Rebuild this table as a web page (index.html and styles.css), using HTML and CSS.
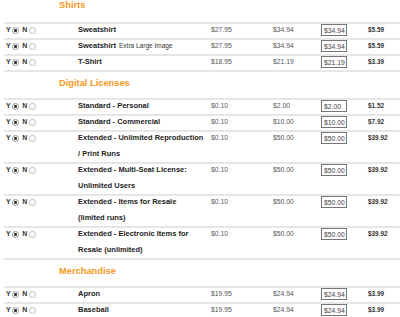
FILE: index.html
```html
<!DOCTYPE html>
<html>
<head>
<meta charset="utf-8">
<link rel="stylesheet" href="styles.css">
</head>
<body>
<div class="sheet">
  <div class="group-head first"><span class="group-title">Shirts</span></div>

  <div class="row">
    <div class="yn"><span class="lbl">Y</span><input type="radio" class="radio" name="r1" checked><span class="lbl n">N</span><input type="radio" class="radio" name="r1"></div>
    <div class="name">Sweatshirt</div>
    <div class="price">$27.95</div>
    <div class="price">$34.94</div>
    <div class="qty"><input class="box" type="text" value="$34.94" readonly></div>
    <div class="net">$5.59</div>
  </div>
  <div class="row">
    <div class="yn"><span class="lbl">Y</span><input type="radio" class="radio" name="r2" checked><span class="lbl n">N</span><input type="radio" class="radio" name="r2"></div>
    <div class="name">Sweatshirt <span class="note">Extra Large Image</span></div>
    <div class="price">$27.95</div>
    <div class="price">$34.94</div>
    <div class="qty"><input class="box" type="text" value="$34.94" readonly></div>
    <div class="net">$5.59</div>
  </div>
  <div class="row">
    <div class="yn"><span class="lbl">Y</span><input type="radio" class="radio" name="r3" checked><span class="lbl n">N</span><input type="radio" class="radio" name="r3"></div>
    <div class="name">T-Shirt</div>
    <div class="price">$18.95</div>
    <div class="price">$21.19</div>
    <div class="qty"><input class="box" type="text" value="$21.19" readonly></div>
    <div class="net">$3.39</div>
  </div>

  <div class="group-head"><span class="group-title">Digital Licenses</span></div>

  <div class="row">
    <div class="yn"><span class="lbl">Y</span><input type="radio" class="radio" name="r4" checked><span class="lbl n">N</span><input type="radio" class="radio" name="r4"></div>
    <div class="name">Standard - Personal</div>
    <div class="price">$0.10</div>
    <div class="price">$2.00</div>
    <div class="qty"><input class="box" type="text" value="$2.00" readonly></div>
    <div class="net">$1.52</div>
  </div>
  <div class="row">
    <div class="yn"><span class="lbl">Y</span><input type="radio" class="radio" name="r5" checked><span class="lbl n">N</span><input type="radio" class="radio" name="r5"></div>
    <div class="name">Standard - Commercial</div>
    <div class="price">$0.10</div>
    <div class="price">$10.00</div>
    <div class="qty"><input class="box" type="text" value="$10.00" readonly></div>
    <div class="net">$7.92</div>
  </div>
  <div class="row">
    <div class="yn"><span class="lbl">Y</span><input type="radio" class="radio" name="r6" checked><span class="lbl n">N</span><input type="radio" class="radio" name="r6"></div>
    <div class="name">Extended - Unlimited Reproduction<br>/ Print Runs</div>
    <div class="price">$0.10</div>
    <div class="price">$50.00</div>
    <div class="qty"><input class="box" type="text" value="$50.00" readonly></div>
    <div class="net">$39.92</div>
  </div>
  <div class="row">
    <div class="yn"><span class="lbl">Y</span><input type="radio" class="radio" name="r7" checked><span class="lbl n">N</span><input type="radio" class="radio" name="r7"></div>
    <div class="name">Extended - Multi-Seat License:<br>Unlimited Users</div>
    <div class="price">$0.10</div>
    <div class="price">$50.00</div>
    <div class="qty"><input class="box" type="text" value="$50.00" readonly></div>
    <div class="net">$39.92</div>
  </div>
  <div class="row">
    <div class="yn"><span class="lbl">Y</span><input type="radio" class="radio" name="r8" checked><span class="lbl n">N</span><input type="radio" class="radio" name="r8"></div>
    <div class="name">Extended - Items for Resale<br>(limited runs)</div>
    <div class="price">$0.10</div>
    <div class="price">$50.00</div>
    <div class="qty"><input class="box" type="text" value="$50.00" readonly></div>
    <div class="net">$39.92</div>
  </div>
  <div class="row">
    <div class="yn"><span class="lbl">Y</span><input type="radio" class="radio" name="r9" checked><span class="lbl n">N</span><input type="radio" class="radio" name="r9"></div>
    <div class="name">Extended - Electronic Items for<br>Resale (unlimited)</div>
    <div class="price">$0.10</div>
    <div class="price">$50.00</div>
    <div class="qty"><input class="box" type="text" value="$50.00" readonly></div>
    <div class="net">$39.92</div>
  </div>

  <div class="group-head"><span class="group-title">Merchandise</span></div>

  <div class="row">
    <div class="yn"><span class="lbl">Y</span><input type="radio" class="radio" name="r10" checked><span class="lbl n">N</span><input type="radio" class="radio" name="r10"></div>
    <div class="name">Apron</div>
    <div class="price">$19.95</div>
    <div class="price">$24.94</div>
    <div class="qty"><input class="box" type="text" value="$24.94" readonly></div>
    <div class="net">$3.99</div>
  </div>
  <div class="row">
    <div class="yn"><span class="lbl">Y</span><input type="radio" class="radio" name="r11" checked><span class="lbl n">N</span><input type="radio" class="radio" name="r11"></div>
    <div class="name">Baseball</div>
    <div class="price">$19.95</div>
    <div class="price">$24.94</div>
    <div class="qty"><input class="box" type="text" value="$24.94" readonly></div>
    <div class="net">$3.99</div>
  </div>
</div>
</body>
</html>
```

FILE: styles.css
```css
html, body {
  margin: 0;
  padding: 0;
  background: #ffffff;
}

body {
  font-family: "Liberation Sans", Arial, sans-serif;
  color: #222;
  overflow: hidden;
}

.sheet {
  padding-left: 4px;
}

.group-head {
  height: 28px;
  box-sizing: border-box;
  padding-top: 8px;
  padding-left: 55px;
  box-shadow: inset 0 2px 0 #e6e6e6;
}

.group-head.first {
  height: 22px;
  padding-top: 0;
  box-shadow: none;
}

.group-title {
  display: block;
  font-size: 9.3px;
  line-height: 10px;
  font-weight: bold;
  color: #f7981d;
}

.row {
  display: grid;
  grid-template-columns: 74px 133px 62px 48px 47px 1fr;
  align-items: start;
  line-height: 16px;
  box-shadow: inset 0 2px 0 #e6e6e6;
}

.yn {
  display: flex;
  align-items: center;
  height: 16px;
  padding-left: 2px;
}

.lbl {
  font-size: 7px;
  font-weight: bold;
  color: #333;
}

.lbl.n {
  margin-left: 3px;
}

.radio {
  -webkit-appearance: none;
  appearance: none;
  margin: 0 0 0 1.5px;
  width: 7px;
  height: 7px;
  box-sizing: border-box;
  border: 1px solid #b8b8b8;
  border-radius: 50%;
  background: #fff;
  position: relative;
  top: 0.5px;
}

.radio:checked {
  border-color: #999;
  background: radial-gradient(circle, #3a3a3a 0, #3a3a3a 1.3px, #fff 1.8px);
}

.name {
  font-size: 7.5px;
  font-weight: bold;
  color: #222;
}

.note {
  font-size: 6.5px;
  font-weight: normal;
  color: #333;
  margin-left: 1px;
}

.price {
  font-size: 6.8px;
  color: #555;
}

.qty {
  height: 16px;
  display: flex;
  align-items: flex-start;
  padding-top: 2px;
  box-sizing: border-box;
}

.box {
  width: 26px;
  height: 12px;
  box-sizing: border-box;
  margin: 0;
  padding: 0 0 0 2px;
  border: 1px solid #777;
  background: #fff;
  font-family: "Liberation Sans", Arial, sans-serif;
  font-size: 6.8px;
  line-height: 10px;
  color: #444;
  outline: none;
}

.net {
  font-size: 6.4px;
  font-weight: bold;
  color: #333;
}
```
